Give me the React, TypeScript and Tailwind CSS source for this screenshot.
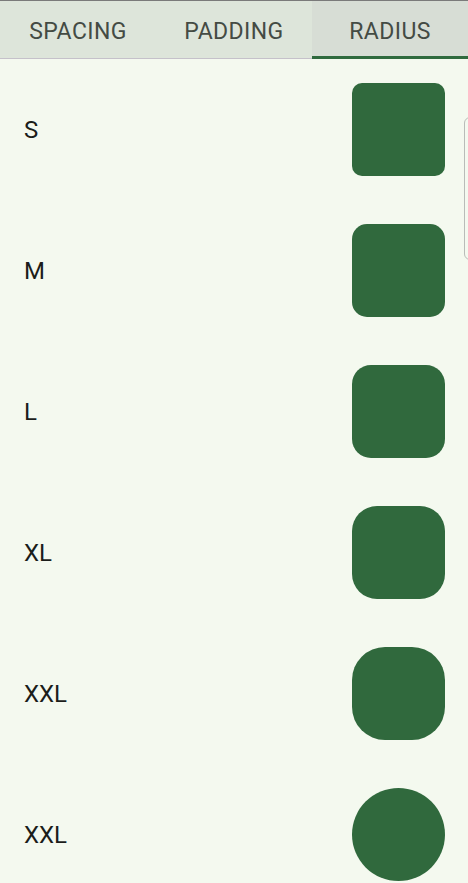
const rows = [
  { label: "S", radius: "rounded-[10px]" },
  { label: "M", radius: "rounded-[15px]" },
  { label: "L", radius: "rounded-[19px]" },
  { label: "XL", radius: "rounded-[25px]" },
  { label: "XXL", radius: "rounded-[33px]" },
  { label: "XXL", radius: "rounded-full" },
];

const tabs = ["SPACING", "PADDING", "RADIUS"];

export default function App() {
  return (
    <div className="relative h-[883px] w-[468px] overflow-hidden bg-[#f4f9ef] font-['Roboto',sans-serif]">
      <div className="flex h-[59px] border-t border-[#7a7a7a] bg-[#dde5da]">
        {tabs.map((t, i) => {
          const active = i === 2;
          return (
            <div
              key={t}
              className={
                active
                  ? "flex flex-1 items-center justify-center border-b-[3px] border-[#2f6a3e] bg-[#d7ddd5] pt-[7px] text-[23px] tracking-[0.4px] text-[#444b44]"
                  : "flex flex-1 items-center justify-center border-b border-[#c5c1ca] pt-[5px] text-[23px] tracking-[0.4px] text-[#444b44]"
              }
            >
              {t}
            </div>
          );
        })}
      </div>

      <div className="flex flex-col">
        {rows.map((r, i) => (
          <div key={i} className="flex h-[141px] shrink-0 items-center justify-between pl-6 pr-[23px]">
            <span className="text-[24px] text-[#1b1d1a]">{r.label}</span>
            <div className={`h-[93px] w-[93px] bg-[#30693d] ${r.radius}`} />
          </div>
        ))}
      </div>

      <div className="absolute right-[-8px] top-[117px] h-[143px] w-[12px] rounded-[6px] border border-[#b9bcb8]" />
    </div>
  );
}
